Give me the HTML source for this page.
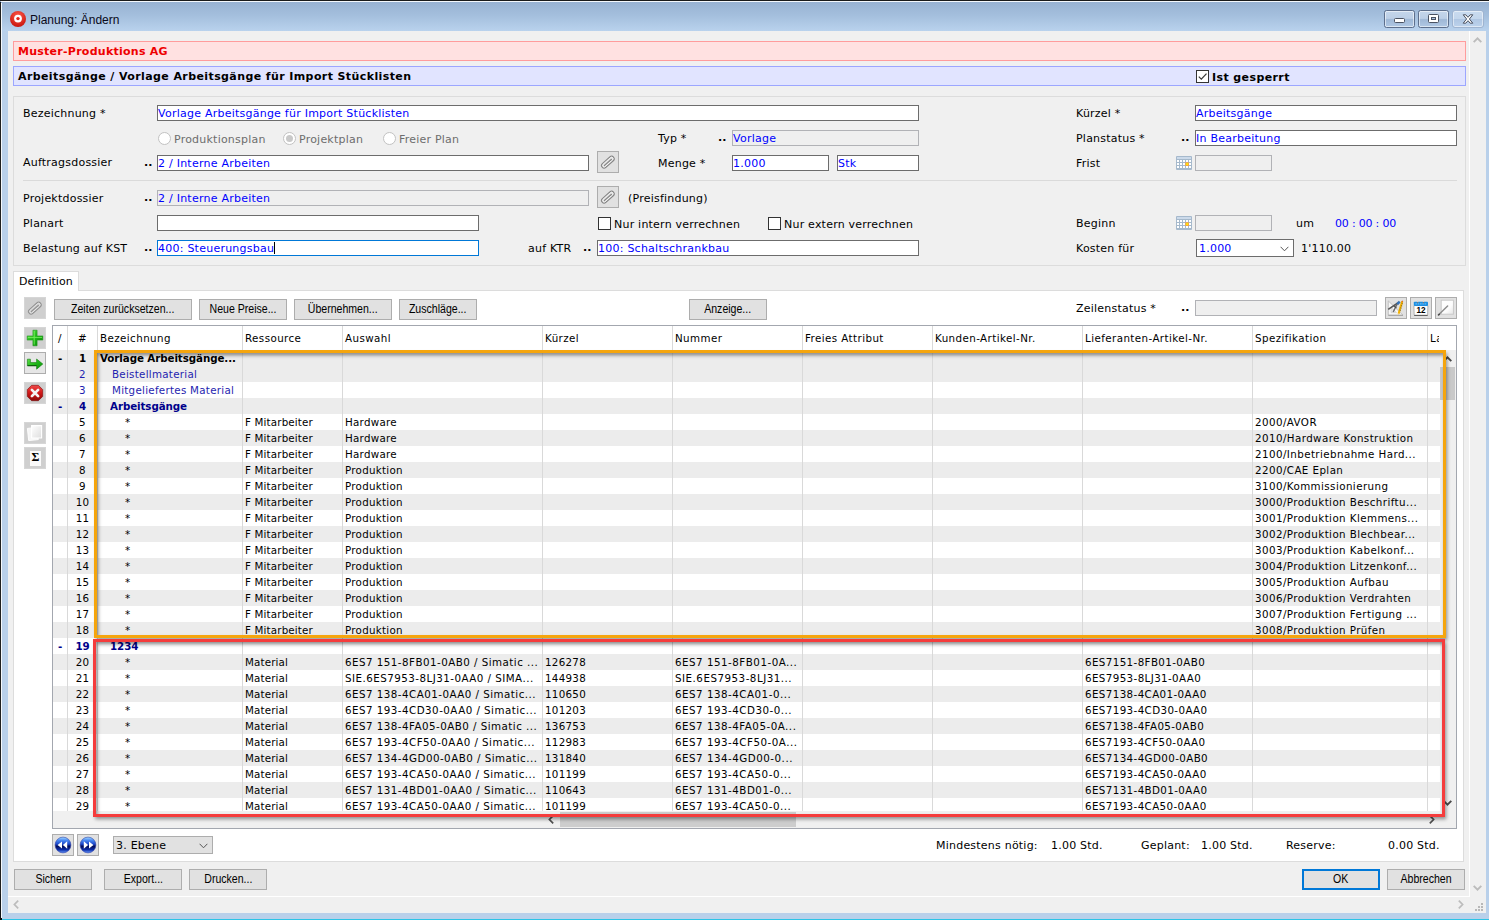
<!DOCTYPE html><html lang="de"><head><meta charset="utf-8"><title>Planung: Ändern</title><style>
*{box-sizing:border-box;margin:0;padding:0}
html,body{width:1489px;height:920px;overflow:hidden}
body{position:relative;background:#b9d0ea;font-family:"DejaVu Sans","Liberation Sans",sans-serif;font-size:11px;line-height:16px;color:#000;-webkit-font-smoothing:antialiased}
.a{position:absolute;white-space:pre}
.v{letter-spacing:.22px}
.g{letter-spacing:.42px;font-size:10.3px}
.b{font-weight:bold}
.bl{color:#0000ff}
.nv{color:#1e1eb0}
.nvb{color:#00008b;font-weight:bold}
.c.b,.c.nvb{letter-spacing:-.08px}
.gr{color:#6d6d6d}
.in{position:absolute;height:16px;border:1px solid #6c6c6c;background:#fff;padding-left:0;padding-top:1px;line-height:14px;white-space:pre;overflow:hidden;color:#0000ff;letter-spacing:.24px}
.in.dis{background:#efefef;border-color:#b1b2b6}
.in.foc{border-color:#0078d7}
.btn{position:absolute;height:21px;border:1px solid #adadad;background:#e1e1e1;text-align:center;font-family:"Liberation Sans",sans-serif;font-size:12px;line-height:19px;white-space:pre;overflow:hidden}
.btn span{display:inline-block;transform:scaleX(.88);transform-origin:50% 50%}
.ib{position:absolute;width:22px;height:22px;border:1px solid #adadad;background:#e1e1e1}
.ib.fl{border-color:#d6d6d6;background:#cfcfcf}
.ib svg{position:absolute;left:-1px;top:-1px}
.dd{position:absolute;font-weight:bold;letter-spacing:0}
.ck{position:absolute;width:13px;height:13px;border:1px solid #333;background:#fff}
.rd{position:absolute;width:13px;height:13px;border:1px solid #c2c2c2;border-radius:50%;background:#fff}
.row{position:absolute;left:53px;width:1387px;height:16px}
.row.e{background:#ececec}
.c{position:absolute;top:0;height:16px;padding-top:1px;line-height:15px;white-space:pre;overflow:hidden;letter-spacing:.28px;font-size:10.3px}
.vl{position:absolute;width:1px;background:#d9d9d9}
</style></head><body>
<div class="a" style="left:0;top:0;width:1489px;height:31px;background:linear-gradient(#98b2d2 6%,#a4bfdd 50%,#b9d2ed 100%)"></div>
<div class="a" style="left:0;top:0;width:1489px;height:1px;background:#1a1a1a"></div>
<div class="a" style="left:1px;top:1px;width:1488px;height:1px;background:#f4f8fc"></div>
<div class="a" style="left:0;top:2px;width:1px;height:892px;background:#1f1f1f"></div>
<div class="a" style="left:0;top:894px;width:1px;height:26px;background:#000;opacity:.9"></div>
<div class="a" style="left:1px;top:3px;width:1px;height:915px;background:#f4f8fc"></div>
<div class="a" style="left:0;top:918.5px;width:1489px;height:1.5px;background:#2cc4e6"></div>
<div class="a" style="left:0;top:918px;width:2px;height:2px;background:#111"></div>
<svg class="a" style="left:9px;top:10px" width="18" height="18" viewBox="0 0 18 18"><defs><radialGradient id="ig" cx="50%" cy="30%" r="70%"><stop offset="0" stop-color="#ff5a4a"/><stop offset="1" stop-color="#c8140c"/></radialGradient></defs><circle cx="9" cy="9" r="8" fill="url(#ig)"/><circle cx="9" cy="8.6" r="3.9" fill="#fff"/><circle cx="9" cy="8.6" r="1.7" fill="#e0241a"/></svg>
<div class="a" style="left:30px;top:12px;font-family:'Liberation Sans',sans-serif;font-size:12px;line-height:16px;color:#0a0a1a">Planung: Ändern</div>
<div class="a" style="left:1384px;top:10px;width:31px;height:18px;border:1px solid #5d6f8c;border-radius:2.5px;background:linear-gradient(#c4d6eb 0,#bccfe6 46%,#9fb8d6 54%,#b0c8e4 100%);box-shadow:inset 0 0 0 1px rgba(255,255,255,.55)"><div class="a" style="left:9px;top:7px;width:11px;height:5px;background:#fff;border:1px solid #4a5262;border-radius:1.5px"></div></div>
<div class="a" style="left:1418px;top:10px;width:31px;height:18px;border:1px solid #5d6f8c;border-radius:2.5px;background:linear-gradient(#c4d6eb 0,#bccfe6 46%,#9fb8d6 54%,#b0c8e4 100%);box-shadow:inset 0 0 0 1px rgba(255,255,255,.55)"><div class="a" style="left:9px;top:3px;width:11px;height:9px;background:#fff;border:1px solid #4a5262;border-radius:1.5px"></div><div class="a" style="left:12px;top:6px;width:5px;height:3px;background:#a9c0dc;border:1px solid #4a5262"></div></div>
<div class="a" style="left:1452px;top:10px;width:32px;height:18px;border:1px solid #9fb4d0;border-radius:3px;background:linear-gradient(#c9dbef 0,#c3d6ec 48%,#b0c7e3 52%,#bcd2ec 100%);box-shadow:inset 0 0 0 1px rgba(255,255,255,.5)"><svg class="a" style="left:9px;top:2px" width="12" height="12" viewBox="0 0 12 12"><path d="M1.2 1.8h2.6L6 4.3l2.2-2.5h2.6L7.4 6l3.4 4.2H8.2L6 7.7l-2.2 2.5H1.2L4.6 6z" fill="#fff" stroke="#4a5262" stroke-width="1"/></svg></div>
<div class="a" style="left:8px;top:31px;width:1478px;height:882px;background:#f0f0f0"></div>
<div class="a" style="left:1469px;top:31px;width:1px;height:866px;background:#fff"></div>
<div class="a" style="left:8px;top:896px;width:1462px;height:1px;background:#fff"></div>
<svg class="a" style="left:1473px;top:37px" width="9" height="6" viewBox="0 0 9 6"><path d="M.7 5.2L4.5 1.4 8.3 5.2" fill="none" stroke="#bcbcbc" stroke-width="1.9"/></svg>
<svg class="a" style="left:1473px;top:885px" width="9" height="6" viewBox="0 0 9 6"><path d="M.7 .8L4.5 4.6 8.3 .8" fill="none" stroke="#bcbcbc" stroke-width="1.9"/></svg>
<svg class="a" style="left:13px;top:900px" width="6" height="9" viewBox="0 0 6 9"><path d="M5.2 .7L1.4 4.5 5.2 8.3" fill="none" stroke="#bcbcbc" stroke-width="1.7"/></svg>
<svg class="a" style="left:1458px;top:900px" width="6" height="9" viewBox="0 0 6 9"><path d="M.8 .7L4.6 4.5 .8 8.3" fill="none" stroke="#bcbcbc" stroke-width="1.7"/></svg>
<svg class="a" style="left:1475px;top:903px" width="8" height="8"><rect x="6" y="0" width="2" height="2" fill="#b8b8b8"/><rect x="3" y="3" width="2" height="2" fill="#b8b8b8"/><rect x="6" y="3" width="2" height="2" fill="#b8b8b8"/><rect x="0" y="6" width="2" height="2" fill="#b8b8b8"/><rect x="3" y="6" width="2" height="2" fill="#b8b8b8"/><rect x="6" y="6" width="2" height="2" fill="#b8b8b8"/></svg>
<div class="a" style="left:13px;top:41px;width:1453px;height:20px;background:#ffe1e1;border:1px solid #ff9c9c"></div>
<div class="a b" style="left:18px;top:44px;color:#ee0000;letter-spacing:.26px">Muster-Produktions AG</div>
<div class="a" style="left:13px;top:66px;width:1453px;height:20px;background:#e1e4ff;border:1px solid #9ca6ff"></div>
<div class="a b" style="left:18px;top:69px;letter-spacing:.4px">Arbeitsgänge / Vorlage Arbeitsgänge für Import Stücklisten</div>
<div class="ck" style="left:1196px;top:70px"><svg class="a" style="left:0;top:0" width="11" height="11" viewBox="0 0 11 11"><path d="M1.8 5.6L4.3 8.1 9.5 2.6" fill="none" stroke="#3a3a3a" stroke-width="1.25"/></svg></div>
<div class="a b" style="left:1212px;top:70px;letter-spacing:.4px">Ist gesperrt</div>
<div class="a" style="left:13px;top:96px;width:1453px;height:170px;border:1px solid #dcdcdc"></div>
<div class="a" style="left:23px;top:180px;width:1434px;height:1px;background:#dadada"></div>
<div class="a v" style="left:23px;top:106px">Bezeichnung *</div>
<div class="in " style="left:157px;top:105px;width:762px">Vorlage Arbeitsgänge für Import Stücklisten</div>
<div class="rd" style="left:158px;top:132px"></div>
<div class="a v gr" style="left:174px;top:132px">Produktionsplan</div>
<div class="rd" style="left:283px;top:132px"><div class="a" style="left:2px;top:2px;width:7px;height:7px;border-radius:50%;background:#c9c9c9"></div></div>
<div class="a v gr" style="left:299px;top:132px">Projektplan</div>
<div class="rd" style="left:383px;top:132px"></div>
<div class="a v gr" style="left:399px;top:132px">Freier Plan</div>
<div class="a v" style="left:658px;top:131px">Typ *</div>
<div class="dd" style="left:718px;top:130px">..</div>
<div class="in dis" style="left:732px;top:130px;width:187px">Vorlage</div>
<div class="a v" style="left:23px;top:155px">Auftragsdossier</div>
<div class="dd" style="left:144px;top:155px">..</div>
<div class="in " style="left:157px;top:155px;width:432px">2 / Interne Arbeiten</div>
<div class="a v" style="left:658px;top:156px">Menge *</div>
<div class="in " style="left:732px;top:155px;width:97px">1.000</div>
<div class="in " style="left:837px;top:155px;width:82px">Stk</div>
<div class="a v" style="left:23px;top:191px">Projektdossier</div>
<div class="dd" style="left:144px;top:190px">..</div>
<div class="in dis" style="left:157px;top:190px;width:432px">2 / Interne Arbeiten</div>
<div class="a v" style="left:628px;top:191px">(Preisfindung)</div>
<div class="a v" style="left:23px;top:216px">Planart</div>
<div class="in " style="left:157px;top:215px;width:322px"></div>
<div class="a v" style="left:23px;top:241px">Belastung auf KST</div>
<div class="dd" style="left:144px;top:240px">..</div>
<div class="in foc" style="left:157px;top:240px;width:322px">400: Steuerungsbau</div>
<div class="a" style="left:274px;top:242px;width:1px;height:12px;background:#000"></div>
<div class="a v" style="left:528px;top:241px">auf KTR</div>
<div class="dd" style="left:583px;top:240px">..</div>
<div class="in " style="left:597px;top:240px;width:322px">100: Schaltschrankbau</div>
<div class="ck" style="left:598px;top:217px"></div>
<div class="a v" style="left:614px;top:217px">Nur intern verrechnen</div>
<div class="ck" style="left:768px;top:217px"></div>
<div class="a v" style="left:784px;top:217px">Nur extern verrechnen</div>
<div class="a v" style="left:1076px;top:106px">Kürzel *</div>
<div class="in " style="left:1195px;top:105px;width:262px">Arbeitsgänge</div>
<div class="a v" style="left:1076px;top:131px">Planstatus *</div>
<div class="dd" style="left:1181px;top:130px">..</div>
<div class="in " style="left:1195px;top:130px;width:262px">In Bearbeitung</div>
<div class="a v" style="left:1076px;top:156px">Frist</div>
<div class="in dis" style="left:1195px;top:155px;width:77px"></div>
<div class="a v" style="left:1076px;top:216px">Beginn</div>
<div class="in dis" style="left:1195px;top:215px;width:77px"></div>
<div class="a v" style="left:1296px;top:216px">um</div>
<div class="a bl" style="left:1335px;top:216px;letter-spacing:-.2px">00 : 00 : 00</div>
<div class="a v" style="left:1076px;top:241px">Kosten für</div>
<div class="a" style="left:1196px;top:239px;width:98px;height:18px;border:1px solid #6c6c6c;background:#fff"></div>
<div class="a v bl" style="left:1199px;top:241px">1.000</div>
<svg class="a" style="left:1280px;top:246px" width="9" height="6" viewBox="0 0 9 6"><path d="M.6 .8L4.5 4.8 8.4 .8" fill="none" stroke="#555" stroke-width="1"/></svg>
<div class="a v" style="left:1301px;top:241px">1&#x27;110.00</div>
<div class="ib" style="left:597px;top:151px"><svg width="22" height="22" viewBox="0 0 22 22"><g transform="rotate(-42 11 11)" fill="none"><rect x="3.3" y="8.5" width="15" height="5" rx="2.5" stroke="#868686" stroke-width="1.3"/><rect x="4.2" y="9.4" width="13.2" height="3.2" rx="1.6" stroke="#fafafa" stroke-width=".7"/><path d="M6 11.3h9.2" stroke="#868686" stroke-width="1.3" stroke-linecap="round"/><path d="M6 12.3h8.4" stroke="#fafafa" stroke-width=".6"/></g></svg></div>
<div class="ib" style="left:597px;top:186px"><svg width="22" height="22" viewBox="0 0 22 22"><g transform="rotate(-42 11 11)" fill="none"><rect x="3.3" y="8.5" width="15" height="5" rx="2.5" stroke="#868686" stroke-width="1.3"/><rect x="4.2" y="9.4" width="13.2" height="3.2" rx="1.6" stroke="#fafafa" stroke-width=".7"/><path d="M6 11.3h9.2" stroke="#868686" stroke-width="1.3" stroke-linecap="round"/><path d="M6 12.3h8.4" stroke="#fafafa" stroke-width=".6"/></g></svg></div>
<svg class="a" style="left:1176px;top:156px" width="16" height="14" viewBox="0 0 16 14"><rect x="0" y="0" width="16" height="14" rx="1" fill="#a6b9cc"/><rect x="1" y="1" width="14" height="2" fill="#ccdaea"/><rect x="1" y="4" width="2" height="2" fill="#fff"/><rect x="4" y="4" width="2" height="2" fill="#fff"/><rect x="7" y="4" width="2" height="2" fill="#fff"/><rect x="10" y="4" width="2" height="2" fill="#fff"/><rect x="13" y="4" width="2" height="2" fill="#fff"/><rect x="1" y="7" width="2" height="2" fill="#fff"/><rect x="4" y="7" width="2" height="2" fill="#fff"/><rect x="7" y="7" width="2" height="2" fill="#fff"/><rect x="10" y="7" width="2" height="2" fill="#fff"/><rect x="13" y="7" width="2" height="2" fill="#fff"/><rect x="1" y="10" width="2" height="2" fill="#fff"/><rect x="4" y="10" width="2" height="2" fill="#fff"/><rect x="7" y="10" width="2" height="2" fill="#fff"/><rect x="10" y="10" width="2" height="2" fill="#fff"/><rect x="13" y="10" width="2" height="2" fill="#fff"/><rect x="9.3" y="6.3" width="3.6" height="3.6" fill="#ffa233"/><rect x="10.2" y="7.2" width="1.8" height="1.8" fill="#fff200"/></svg>
<svg class="a" style="left:1176px;top:216px" width="16" height="14" viewBox="0 0 16 14"><rect x="0" y="0" width="16" height="14" rx="1" fill="#a6b9cc"/><rect x="1" y="1" width="14" height="2" fill="#ccdaea"/><rect x="1" y="4" width="2" height="2" fill="#fff"/><rect x="4" y="4" width="2" height="2" fill="#fff"/><rect x="7" y="4" width="2" height="2" fill="#fff"/><rect x="10" y="4" width="2" height="2" fill="#fff"/><rect x="13" y="4" width="2" height="2" fill="#fff"/><rect x="1" y="7" width="2" height="2" fill="#fff"/><rect x="4" y="7" width="2" height="2" fill="#fff"/><rect x="7" y="7" width="2" height="2" fill="#fff"/><rect x="10" y="7" width="2" height="2" fill="#fff"/><rect x="13" y="7" width="2" height="2" fill="#fff"/><rect x="1" y="10" width="2" height="2" fill="#fff"/><rect x="4" y="10" width="2" height="2" fill="#fff"/><rect x="7" y="10" width="2" height="2" fill="#fff"/><rect x="10" y="10" width="2" height="2" fill="#fff"/><rect x="13" y="10" width="2" height="2" fill="#fff"/><rect x="9.3" y="6.3" width="3.6" height="3.6" fill="#ffa233"/><rect x="10.2" y="7.2" width="1.8" height="1.8" fill="#fff200"/></svg>
<div class="a" style="left:13px;top:290px;width:1451px;height:572px;background:#fff;border:1px solid #dcdcdc"></div>
<div class="a" style="left:13px;top:271px;width:66px;height:20px;background:#fff;border:1px solid #dcdcdc;border-bottom:none"></div>
<div class="a" style="left:19px;top:274px;letter-spacing:.05px">Definition</div>
<div class="ib fl" style="left:24px;top:297px"><svg width="22" height="22" viewBox="0 0 22 22"><g transform="rotate(-42 11 11)" fill="none"><rect x="3.3" y="8.5" width="15" height="5" rx="2.5" stroke="#929292" stroke-width="1.3"/><rect x="4.2" y="9.4" width="13.2" height="3.2" rx="1.6" stroke="#ececec" stroke-width=".7"/><path d="M6 11.3h9.2" stroke="#929292" stroke-width="1.3" stroke-linecap="round"/><path d="M6 12.3h8.4" stroke="#ececec" stroke-width=".6"/></g></svg></div>
<div class="btn" style="left:54px;top:299px;width:138px;"><span>Zeiten zurücksetzen...</span></div>
<div class="btn" style="left:199px;top:299px;width:88px;"><span>Neue Preise...</span></div>
<div class="btn" style="left:294px;top:299px;width:98px;"><span>Übernehmen...</span></div>
<div class="btn" style="left:399px;top:299px;width:78px;"><span>Zuschläge...</span></div>
<div class="btn" style="left:689px;top:299px;width:78px;"><span>Anzeige...</span></div>
<div class="a v" style="left:1076px;top:301px">Zeilenstatus *</div>
<div class="dd" style="left:1181px;top:300px">..</div>
<div class="in dis" style="left:1195px;top:300px;width:182px"></div>
<div class="ib" style="left:1385px;top:297px"><svg width="22" height="22" viewBox="0 0 22 22"><path d="M3.3 3.9V18.2H18z" fill="#f7f7f7" stroke="#b9b9b9" stroke-width=".8"/><path d="M3.3 18.3H18" stroke="#9a9a9a" stroke-width=".9"/><path d="M6 10v5.6h5.6z" fill="#e4e4e4" stroke="#c4c4c4" stroke-width=".5"/><path d="M12.8 6L3.2 12.3" stroke="#555" stroke-width="1.5"/><path d="M12.4 6.4L8.2 15" stroke="#6a6a6a" stroke-width="1.4"/><path d="M9 9.4l2.6 1.4" stroke="#444" stroke-width="1"/><path d="M11.6 6.2l2.2-2.2 1.5 1.5-2.2 2.2z" fill="#2f74c0" stroke="#1d4f8a" stroke-width=".4"/><path d="M17.2 4.4L13.6 16.8" stroke="#f2b100" stroke-width="2.1"/><path d="M16.6 6.4l1.2.4M16 8.6l1.2.4M15.3 10.8l1.2.4M14.7 13l1.2.4" stroke="#5a4a20" stroke-width=".7"/><path d="M13 16.5l1.3.4-1 1.4z" fill="#e8c890"/><path d="M17 3.6l1.1.3-.4 1.4-1.1-.3z" fill="#d8642a"/></svg></div>
<div class="ib" style="left:1410px;top:297px"><svg width="22" height="22" viewBox="0 0 22 22"><path d="M3.9 8.6h14l-.3 9.6H4.2z" fill="#fff" stroke="#8a8a8a" stroke-width=".6"/><path d="M4.2 18.5h13.4" stroke="#555" stroke-width=".9"/><rect x="3.8" y="4.7" width="14.2" height="4.2" rx=".8" fill="#1b8fe2"/><path d="M5.4 6.9h11" stroke="#7cc4f4" stroke-width="1" stroke-dasharray="1.6 .7"/><path d="M7.7 3.3v2.2M13.5 3.3v2.2" stroke="#d8d8d8" stroke-width="1.1"/><path d="M7.7 5.2v.9M13.5 5.2v.9" stroke="#8a5a4a" stroke-width=".9"/><text x="11" y="16.3" text-anchor="middle" font-family="Liberation Sans,sans-serif" font-weight="bold" font-size="8.2" fill="#000">12</text></svg></div>
<div class="ib" style="left:1435px;top:297px"><svg width="22" height="22" viewBox="0 0 22 22"><defs><linearGradient id="wq" x1="0" y1="0" x2="1" y2="1"><stop offset="0" stop-color="#fff"/><stop offset=".6" stop-color="#fcfcfc"/><stop offset="1" stop-color="#e4e4e4"/></linearGradient></defs><rect x="6.2" y="3.2" width="12.2" height="14" fill="url(#wq)" stroke="#c6c6c6" stroke-width=".9"/><path d="M3.4 18L12.6 9" stroke="#8e8e8e" stroke-width="1.5" stroke-linecap="round"/><path d="M3.2 18.3l1.6-1.4" stroke="#4a4a4a" stroke-width="1.5"/></svg></div>
<div class="ib fl" style="left:24px;top:327px"><svg width="22" height="22" viewBox="0 0 22 22"><defs><linearGradient id="gp" x1="0" y1="0" x2="1" y2="1"><stop offset="0" stop-color="#5fe04a"/><stop offset=".5" stop-color="#20b818"/><stop offset="1" stop-color="#0a8a0a"/></linearGradient></defs><path d="M8.9 3.2h4.2v5.7h5.7v4.2h-5.7v5.7H8.9v-5.7H3.2V8.9h5.7z" fill="url(#gp)" stroke="#138a10" stroke-width=".5"/><path d="M10.2 4v13.6M4 10.4h14" stroke="#8dff70" stroke-width="1" opacity=".7"/></svg></div>
<div class="ib" style="left:24px;top:352px;background:#e6e6e6"><svg width="22" height="22" viewBox="0 0 22 22"><path d="M3.4 7.2h3v3.4h6.2V7l6.2 5-6.2 5.2v-3.4H3.4z" fill="url(#gp)" stroke="#0c7a0c" stroke-width=".6"/><path d="M3.6 13.6h9" stroke="#064f06" stroke-width=".9"/></svg></div>
<div class="ib fl" style="left:24px;top:382px"><svg width="22" height="22" viewBox="0 0 22 22"><defs><linearGradient id="gr" x1="0" y1="0" x2="0" y2="1"><stop offset="0" stop-color="#f04848"/><stop offset=".5" stop-color="#d01818"/><stop offset="1" stop-color="#8c0808"/></linearGradient></defs><path d="M7.6 3.3h6.8l4.3 4.3v6.8l-4.3 4.3H7.6l-4.3-4.3V7.6z" fill="url(#gr)" stroke="#7a0a0a" stroke-width=".6"/><path d="M7.9 7.9l6.2 6.2M14.1 7.9l-6.2 6.2" stroke="#f4f4f4" stroke-width="2.7" stroke-linecap="round"/></svg></div>
<div class="ib fl" style="left:24px;top:422px"><svg width="22" height="22" viewBox="0 0 22 22"><defs><linearGradient id="pg" x1="0" y1="0" x2="1" y2="1"><stop offset="0" stop-color="#fff"/><stop offset="1" stop-color="#dedede"/></linearGradient></defs><path d="M3.4 6.4l9.6-1 1.3 12.2-9.6 1z" fill="#f6f6f6" stroke="#fff" stroke-width=".9"/><path d="M7.6 3.6h10v12.4h-10z" fill="url(#pg)" stroke="#fff" stroke-width="1.1"/></svg></div>
<div class="ib fl" style="left:24px;top:447px"><div class="a" style="left:5px;top:3px;width:11px;height:15px;background:#fafafa"></div><div class="a" style="left:5px;top:1px;width:11px;height:16px;text-align:center;font-family:'Liberation Serif',serif;font-weight:bold;font-size:12px;line-height:17px;letter-spacing:0">Σ</div></div>
<div class="a" style="left:52px;top:325px;width:1405px;height:504px;border:1px solid #a3a7af;background:#f0f0f0"></div>
<div class="a" style="left:53px;top:326px;width:1403px;height:24px;background:#fff"></div>
<div class="a g" style="left:53px;top:330px;width:14px;text-align:center">/</div>
<div class="a g" style="left:68px;top:330px;width:29px;text-align:center">#</div>
<div class="a g" style="left:100px;top:330px">Bezeichnung</div>
<div class="a g" style="left:245px;top:330px">Ressource</div>
<div class="a g" style="left:345px;top:330px">Auswahl</div>
<div class="a g" style="left:545px;top:330px">Kürzel</div>
<div class="a g" style="left:675px;top:330px">Nummer</div>
<div class="a g" style="left:805px;top:330px">Freies Attribut</div>
<div class="a g" style="left:935px;top:330px">Kunden-Artikel-Nr.</div>
<div class="a g" style="left:1085px;top:330px">Lieferanten-Artikel-Nr.</div>
<div class="a g" style="left:1255px;top:330px">Spezifikation</div>
<div class="a g" style="left:1430px;top:330px;width:9px;overflow:hidden">La</div>
<div class="a" style="left:0;top:350px;width:1489px;height:461px;overflow:hidden">
<div class="a" style="left:53px;top:0;width:1387px;height:461px;background:#fff"></div>
<div class="row e" style="top:0px">
<div class="c b" style="left:0px;width:14px;text-align:center">-</div>
<div class="c b" style="left:15px;width:29px;text-align:center">1</div>
<div class="c b" style="left:47px;width:142px">Vorlage Arbeitsgänge...</div>
</div>
<div class="row e" style="top:16px">
<div class="c nv" style="left:15px;width:29px;text-align:center">2</div>
<div class="c nv" style="left:59px;width:130px">Beistellmaterial</div>
</div>
<div class="row" style="top:32px">
<div class="c nv" style="left:15px;width:29px;text-align:center">3</div>
<div class="c nv" style="left:59px;width:130px">Mitgeliefertes Material</div>
</div>
<div class="row e" style="top:48px">
<div class="c nvb" style="left:0px;width:14px;text-align:center">-</div>
<div class="c nvb" style="left:15px;width:29px;text-align:center">4</div>
<div class="c nvb" style="left:57px;width:132px">Arbeitsgänge</div>
</div>
<div class="row" style="top:64px">
<div class="c " style="left:15px;width:29px;text-align:center">5</div>
<div class="c " style="left:72px;width:117px">*</div>
<div class="c " style="left:192px;width:97px;letter-spacing:0.16px">F Mitarbeiter</div>
<div class="c " style="left:292px;width:197px">Hardware</div>
<div class="c " style="left:1202px;width:172px;letter-spacing:0.42px">2000/AVOR</div>
</div>
<div class="row e" style="top:80px">
<div class="c " style="left:15px;width:29px;text-align:center">6</div>
<div class="c " style="left:72px;width:117px">*</div>
<div class="c " style="left:192px;width:97px;letter-spacing:0.16px">F Mitarbeiter</div>
<div class="c " style="left:292px;width:197px">Hardware</div>
<div class="c " style="left:1202px;width:172px;letter-spacing:0.42px">2010/Hardware Konstruktion</div>
</div>
<div class="row" style="top:96px">
<div class="c " style="left:15px;width:29px;text-align:center">7</div>
<div class="c " style="left:72px;width:117px">*</div>
<div class="c " style="left:192px;width:97px;letter-spacing:0.16px">F Mitarbeiter</div>
<div class="c " style="left:292px;width:197px">Hardware</div>
<div class="c " style="left:1202px;width:172px;letter-spacing:0.42px">2100/Inbetriebnahme Hard...</div>
</div>
<div class="row e" style="top:112px">
<div class="c " style="left:15px;width:29px;text-align:center">8</div>
<div class="c " style="left:72px;width:117px">*</div>
<div class="c " style="left:192px;width:97px;letter-spacing:0.16px">F Mitarbeiter</div>
<div class="c " style="left:292px;width:197px">Produktion</div>
<div class="c " style="left:1202px;width:172px;letter-spacing:0.42px">2200/CAE Eplan</div>
</div>
<div class="row" style="top:128px">
<div class="c " style="left:15px;width:29px;text-align:center">9</div>
<div class="c " style="left:72px;width:117px">*</div>
<div class="c " style="left:192px;width:97px;letter-spacing:0.16px">F Mitarbeiter</div>
<div class="c " style="left:292px;width:197px">Produktion</div>
<div class="c " style="left:1202px;width:172px;letter-spacing:0.42px">3100/Kommissionierung</div>
</div>
<div class="row e" style="top:144px">
<div class="c " style="left:15px;width:29px;text-align:center">10</div>
<div class="c " style="left:72px;width:117px">*</div>
<div class="c " style="left:192px;width:97px;letter-spacing:0.16px">F Mitarbeiter</div>
<div class="c " style="left:292px;width:197px">Produktion</div>
<div class="c " style="left:1202px;width:172px;letter-spacing:0.42px">3000/Produktion Beschriftu...</div>
</div>
<div class="row" style="top:160px">
<div class="c " style="left:15px;width:29px;text-align:center">11</div>
<div class="c " style="left:72px;width:117px">*</div>
<div class="c " style="left:192px;width:97px;letter-spacing:0.16px">F Mitarbeiter</div>
<div class="c " style="left:292px;width:197px">Produktion</div>
<div class="c " style="left:1202px;width:172px;letter-spacing:0.42px">3001/Produktion Klemmens...</div>
</div>
<div class="row e" style="top:176px">
<div class="c " style="left:15px;width:29px;text-align:center">12</div>
<div class="c " style="left:72px;width:117px">*</div>
<div class="c " style="left:192px;width:97px;letter-spacing:0.16px">F Mitarbeiter</div>
<div class="c " style="left:292px;width:197px">Produktion</div>
<div class="c " style="left:1202px;width:172px;letter-spacing:0.42px">3002/Produktion Blechbear...</div>
</div>
<div class="row" style="top:192px">
<div class="c " style="left:15px;width:29px;text-align:center">13</div>
<div class="c " style="left:72px;width:117px">*</div>
<div class="c " style="left:192px;width:97px;letter-spacing:0.16px">F Mitarbeiter</div>
<div class="c " style="left:292px;width:197px">Produktion</div>
<div class="c " style="left:1202px;width:172px;letter-spacing:0.42px">3003/Produktion Kabelkonf...</div>
</div>
<div class="row e" style="top:208px">
<div class="c " style="left:15px;width:29px;text-align:center">14</div>
<div class="c " style="left:72px;width:117px">*</div>
<div class="c " style="left:192px;width:97px;letter-spacing:0.16px">F Mitarbeiter</div>
<div class="c " style="left:292px;width:197px">Produktion</div>
<div class="c " style="left:1202px;width:172px;letter-spacing:0.42px">3004/Produktion Litzenkonf...</div>
</div>
<div class="row" style="top:224px">
<div class="c " style="left:15px;width:29px;text-align:center">15</div>
<div class="c " style="left:72px;width:117px">*</div>
<div class="c " style="left:192px;width:97px;letter-spacing:0.16px">F Mitarbeiter</div>
<div class="c " style="left:292px;width:197px">Produktion</div>
<div class="c " style="left:1202px;width:172px;letter-spacing:0.42px">3005/Produktion Aufbau</div>
</div>
<div class="row e" style="top:240px">
<div class="c " style="left:15px;width:29px;text-align:center">16</div>
<div class="c " style="left:72px;width:117px">*</div>
<div class="c " style="left:192px;width:97px;letter-spacing:0.16px">F Mitarbeiter</div>
<div class="c " style="left:292px;width:197px">Produktion</div>
<div class="c " style="left:1202px;width:172px;letter-spacing:0.42px">3006/Produktion Verdrahten</div>
</div>
<div class="row" style="top:256px">
<div class="c " style="left:15px;width:29px;text-align:center">17</div>
<div class="c " style="left:72px;width:117px">*</div>
<div class="c " style="left:192px;width:97px;letter-spacing:0.16px">F Mitarbeiter</div>
<div class="c " style="left:292px;width:197px">Produktion</div>
<div class="c " style="left:1202px;width:172px;letter-spacing:0.42px">3007/Produktion Fertigung ...</div>
</div>
<div class="row e" style="top:272px">
<div class="c " style="left:15px;width:29px;text-align:center">18</div>
<div class="c " style="left:72px;width:117px">*</div>
<div class="c " style="left:192px;width:97px;letter-spacing:0.16px">F Mitarbeiter</div>
<div class="c " style="left:292px;width:197px">Produktion</div>
<div class="c " style="left:1202px;width:172px;letter-spacing:0.42px">3008/Produktion Prüfen</div>
</div>
<div class="row" style="top:288px">
<div class="c nvb" style="left:0px;width:14px;text-align:center">-</div>
<div class="c nvb" style="left:15px;width:29px;text-align:center">19</div>
<div class="c nvb" style="left:57px;width:132px">1234</div>
</div>
<div class="row e" style="top:304px">
<div class="c " style="left:15px;width:29px;text-align:center">20</div>
<div class="c " style="left:72px;width:117px">*</div>
<div class="c " style="left:192px;width:97px;letter-spacing:0.16px">Material</div>
<div class="c " style="left:292px;width:197px;letter-spacing:0.47px">6ES7 151-8FB01-0AB0 / Simatic ...</div>
<div class="c " style="left:492px;width:127px">126278</div>
<div class="c " style="left:622px;width:127px;letter-spacing:0.5px">6ES7 151-8FB01-0A...</div>
<div class="c " style="left:1032px;width:167px;letter-spacing:0.39px">6ES7151-8FB01-0AB0</div>
</div>
<div class="row" style="top:320px">
<div class="c " style="left:15px;width:29px;text-align:center">21</div>
<div class="c " style="left:72px;width:117px">*</div>
<div class="c " style="left:192px;width:97px;letter-spacing:0.16px">Material</div>
<div class="c " style="left:292px;width:197px;letter-spacing:0.47px">SIE.6ES7953-8LJ31-0AA0 / SIMA...</div>
<div class="c " style="left:492px;width:127px">144938</div>
<div class="c " style="left:622px;width:127px;letter-spacing:0.5px">SIE.6ES7953-8LJ31...</div>
<div class="c " style="left:1032px;width:167px;letter-spacing:0.39px">6ES7953-8LJ31-0AA0</div>
</div>
<div class="row e" style="top:336px">
<div class="c " style="left:15px;width:29px;text-align:center">22</div>
<div class="c " style="left:72px;width:117px">*</div>
<div class="c " style="left:192px;width:97px;letter-spacing:0.16px">Material</div>
<div class="c " style="left:292px;width:197px;letter-spacing:0.47px">6ES7 138-4CA01-0AA0 / Simatic...</div>
<div class="c " style="left:492px;width:127px">110650</div>
<div class="c " style="left:622px;width:127px;letter-spacing:0.5px">6ES7 138-4CA01-0...</div>
<div class="c " style="left:1032px;width:167px;letter-spacing:0.39px">6ES7138-4CA01-0AA0</div>
</div>
<div class="row" style="top:352px">
<div class="c " style="left:15px;width:29px;text-align:center">23</div>
<div class="c " style="left:72px;width:117px">*</div>
<div class="c " style="left:192px;width:97px;letter-spacing:0.16px">Material</div>
<div class="c " style="left:292px;width:197px;letter-spacing:0.47px">6ES7 193-4CD30-0AA0 / Simatic...</div>
<div class="c " style="left:492px;width:127px">101203</div>
<div class="c " style="left:622px;width:127px;letter-spacing:0.5px">6ES7 193-4CD30-0...</div>
<div class="c " style="left:1032px;width:167px;letter-spacing:0.39px">6ES7193-4CD30-0AA0</div>
</div>
<div class="row e" style="top:368px">
<div class="c " style="left:15px;width:29px;text-align:center">24</div>
<div class="c " style="left:72px;width:117px">*</div>
<div class="c " style="left:192px;width:97px;letter-spacing:0.16px">Material</div>
<div class="c " style="left:292px;width:197px;letter-spacing:0.47px">6ES7 138-4FA05-0AB0 / Simatic ...</div>
<div class="c " style="left:492px;width:127px">136753</div>
<div class="c " style="left:622px;width:127px;letter-spacing:0.5px">6ES7 138-4FA05-0A...</div>
<div class="c " style="left:1032px;width:167px;letter-spacing:0.39px">6ES7138-4FA05-0AB0</div>
</div>
<div class="row" style="top:384px">
<div class="c " style="left:15px;width:29px;text-align:center">25</div>
<div class="c " style="left:72px;width:117px">*</div>
<div class="c " style="left:192px;width:97px;letter-spacing:0.16px">Material</div>
<div class="c " style="left:292px;width:197px;letter-spacing:0.47px">6ES7 193-4CF50-0AA0 / Simatic...</div>
<div class="c " style="left:492px;width:127px">112983</div>
<div class="c " style="left:622px;width:127px;letter-spacing:0.5px">6ES7 193-4CF50-0A...</div>
<div class="c " style="left:1032px;width:167px;letter-spacing:0.39px">6ES7193-4CF50-0AA0</div>
</div>
<div class="row e" style="top:400px">
<div class="c " style="left:15px;width:29px;text-align:center">26</div>
<div class="c " style="left:72px;width:117px">*</div>
<div class="c " style="left:192px;width:97px;letter-spacing:0.16px">Material</div>
<div class="c " style="left:292px;width:197px;letter-spacing:0.47px">6ES7 134-4GD00-0AB0 / Simatic...</div>
<div class="c " style="left:492px;width:127px">131840</div>
<div class="c " style="left:622px;width:127px;letter-spacing:0.5px">6ES7 134-4GD00-0...</div>
<div class="c " style="left:1032px;width:167px;letter-spacing:0.39px">6ES7134-4GD00-0AB0</div>
</div>
<div class="row" style="top:416px">
<div class="c " style="left:15px;width:29px;text-align:center">27</div>
<div class="c " style="left:72px;width:117px">*</div>
<div class="c " style="left:192px;width:97px;letter-spacing:0.16px">Material</div>
<div class="c " style="left:292px;width:197px;letter-spacing:0.47px">6ES7 193-4CA50-0AA0 / Simatic...</div>
<div class="c " style="left:492px;width:127px">101199</div>
<div class="c " style="left:622px;width:127px;letter-spacing:0.5px">6ES7 193-4CA50-0...</div>
<div class="c " style="left:1032px;width:167px;letter-spacing:0.39px">6ES7193-4CA50-0AA0</div>
</div>
<div class="row e" style="top:432px">
<div class="c " style="left:15px;width:29px;text-align:center">28</div>
<div class="c " style="left:72px;width:117px">*</div>
<div class="c " style="left:192px;width:97px;letter-spacing:0.16px">Material</div>
<div class="c " style="left:292px;width:197px;letter-spacing:0.47px">6ES7 131-4BD01-0AA0 / Simatic...</div>
<div class="c " style="left:492px;width:127px">110643</div>
<div class="c " style="left:622px;width:127px;letter-spacing:0.5px">6ES7 131-4BD01-0...</div>
<div class="c " style="left:1032px;width:167px;letter-spacing:0.39px">6ES7131-4BD01-0AA0</div>
</div>
<div class="row" style="top:448px">
<div class="c " style="left:15px;width:29px;text-align:center">29</div>
<div class="c " style="left:72px;width:117px">*</div>
<div class="c " style="left:192px;width:97px;letter-spacing:0.16px">Material</div>
<div class="c " style="left:292px;width:197px;letter-spacing:0.47px">6ES7 193-4CA50-0AA0 / Simatic...</div>
<div class="c " style="left:492px;width:127px">101199</div>
<div class="c " style="left:622px;width:127px;letter-spacing:0.5px">6ES7 193-4CA50-0...</div>
<div class="c " style="left:1032px;width:167px;letter-spacing:0.39px">6ES7193-4CA50-0AA0</div>
</div>
</div>
<div class="vl" style="left:67px;top:326px;height:485px"></div>
<div class="vl" style="left:97px;top:326px;height:485px"></div>
<div class="vl" style="left:242px;top:326px;height:485px"></div>
<div class="vl" style="left:342px;top:326px;height:485px"></div>
<div class="vl" style="left:542px;top:326px;height:485px"></div>
<div class="vl" style="left:672px;top:326px;height:485px"></div>
<div class="vl" style="left:802px;top:326px;height:485px"></div>
<div class="vl" style="left:932px;top:326px;height:485px"></div>
<div class="vl" style="left:1082px;top:326px;height:485px"></div>
<div class="vl" style="left:1252px;top:326px;height:485px"></div>
<div class="vl" style="left:1427px;top:326px;height:485px"></div>
<div class="a" style="left:1440px;top:350px;width:16px;height:461px;background:#f0f0f0"></div>
<div class="a" style="left:1440px;top:367px;width:15px;height:33px;background:#c9c9c9"></div>
<svg class="a" style="left:1443px;top:356px" width="9" height="6" viewBox="0 0 9 6"><path d="M.7 5.2L4.5 1.4 8.3 5.2" fill="none" stroke="#484848" stroke-width="1.9"/></svg>
<svg class="a" style="left:1443px;top:800px" width="9" height="6" viewBox="0 0 9 6"><path d="M.7 .8L4.5 4.6 8.3 .8" fill="none" stroke="#484848" stroke-width="1.9"/></svg>
<div class="a" style="left:560px;top:812px;width:236px;height:15px;background:#cdcdcd"></div>
<svg class="a" style="left:548px;top:815px" width="6" height="9" viewBox="0 0 6 9"><path d="M5.2 .7L1.4 4.5 5.2 8.3" fill="none" stroke="#505050" stroke-width="1.7"/></svg>
<svg class="a" style="left:1429px;top:815px" width="6" height="9" viewBox="0 0 6 9"><path d="M.8 .7L4.6 4.5 .8 8.3" fill="none" stroke="#505050" stroke-width="1.7"/></svg>
<div class="a" style="left:94px;top:350px;width:1352px;height:288px;border:3px solid #f5a50d;box-shadow:1.5px 2.5px 3.5px rgba(0,0,0,.4),inset 1.5px 2.5px 3.5px rgba(0,0,0,.4)"></div>
<div class="a" style="left:93px;top:639px;width:1352px;height:178px;border:3px solid #f53c3c;box-shadow:1.5px 2.5px 3.5px rgba(0,0,0,.4),inset 1.5px 2.5px 3.5px rgba(0,0,0,.4)"></div>
<div class="ib" style="left:52px;top:834px"><svg width="22" height="22" viewBox="0 0 22 22"><defs><linearGradient id="nb52" x1="0" y1="0" x2="0" y2="1"><stop offset="0" stop-color="#a8dcff"/><stop offset=".2" stop-color="#4a8af4"/><stop offset=".45" stop-color="#1b45c8"/><stop offset=".58" stop-color="#030c58"/><stop offset=".8" stop-color="#0a2ca8"/><stop offset="1" stop-color="#6a9cff"/></linearGradient></defs><circle cx="11" cy="11" r="7.9" fill="url(#nb52)" stroke="#1a2a9a" stroke-width=".5"/><path d="M5.6 11l4.4-3.4v6.8zM10.9 11l4.3-3.7v7.4z" fill="#fff"/></svg></div>
<div class="ib" style="left:77px;top:834px"><svg width="22" height="22" viewBox="0 0 22 22"><defs><linearGradient id="nb77" x1="0" y1="0" x2="0" y2="1"><stop offset="0" stop-color="#a8dcff"/><stop offset=".2" stop-color="#4a8af4"/><stop offset=".45" stop-color="#1b45c8"/><stop offset=".58" stop-color="#030c58"/><stop offset=".8" stop-color="#0a2ca8"/><stop offset="1" stop-color="#6a9cff"/></linearGradient></defs><circle cx="11" cy="11" r="7.9" fill="url(#nb77)" stroke="#1a2a9a" stroke-width=".5"/><path d="M16.4 11l-4.4-3.4v6.8zM11.1 11l-4.3-3.7v7.4z" fill="#fff"/></svg></div>
<div class="a" style="left:113px;top:836px;width:100px;height:18px;border:1px solid #adadad;background:#e1e1e1"></div>
<div class="a v" style="left:116px;top:838px">3. Ebene</div>
<svg class="a" style="left:199px;top:843px" width="9" height="6" viewBox="0 0 9 6"><path d="M.6 .8L4.5 4.8 8.4 .8" fill="none" stroke="#555" stroke-width="1"/></svg>
<div class="a v" style="left:936px;top:838px">Mindestens nötig:</div>
<div class="a v" style="left:1051px;top:838px">1.00 Std.</div>
<div class="a v" style="left:1141px;top:838px">Geplant:</div>
<div class="a v" style="left:1201px;top:838px">1.00 Std.</div>
<div class="a v" style="left:1286px;top:838px">Reserve:</div>
<div class="a v" style="left:1388px;top:838px">0.00 Std.</div>
<div class="btn" style="left:14px;top:869px;width:78px;"><span>Sichern</span></div>
<div class="btn" style="left:104px;top:869px;width:78px;"><span>Export...</span></div>
<div class="btn" style="left:189px;top:869px;width:78px;"><span>Drucken...</span></div>
<div class="btn" style="left:1302px;top:869px;width:78px;border:2px solid #0078d7;line-height:17px"><span>OK</span></div>
<div class="btn" style="left:1387px;top:869px;width:78px;"><span>Abbrechen</span></div>
</body></html>
